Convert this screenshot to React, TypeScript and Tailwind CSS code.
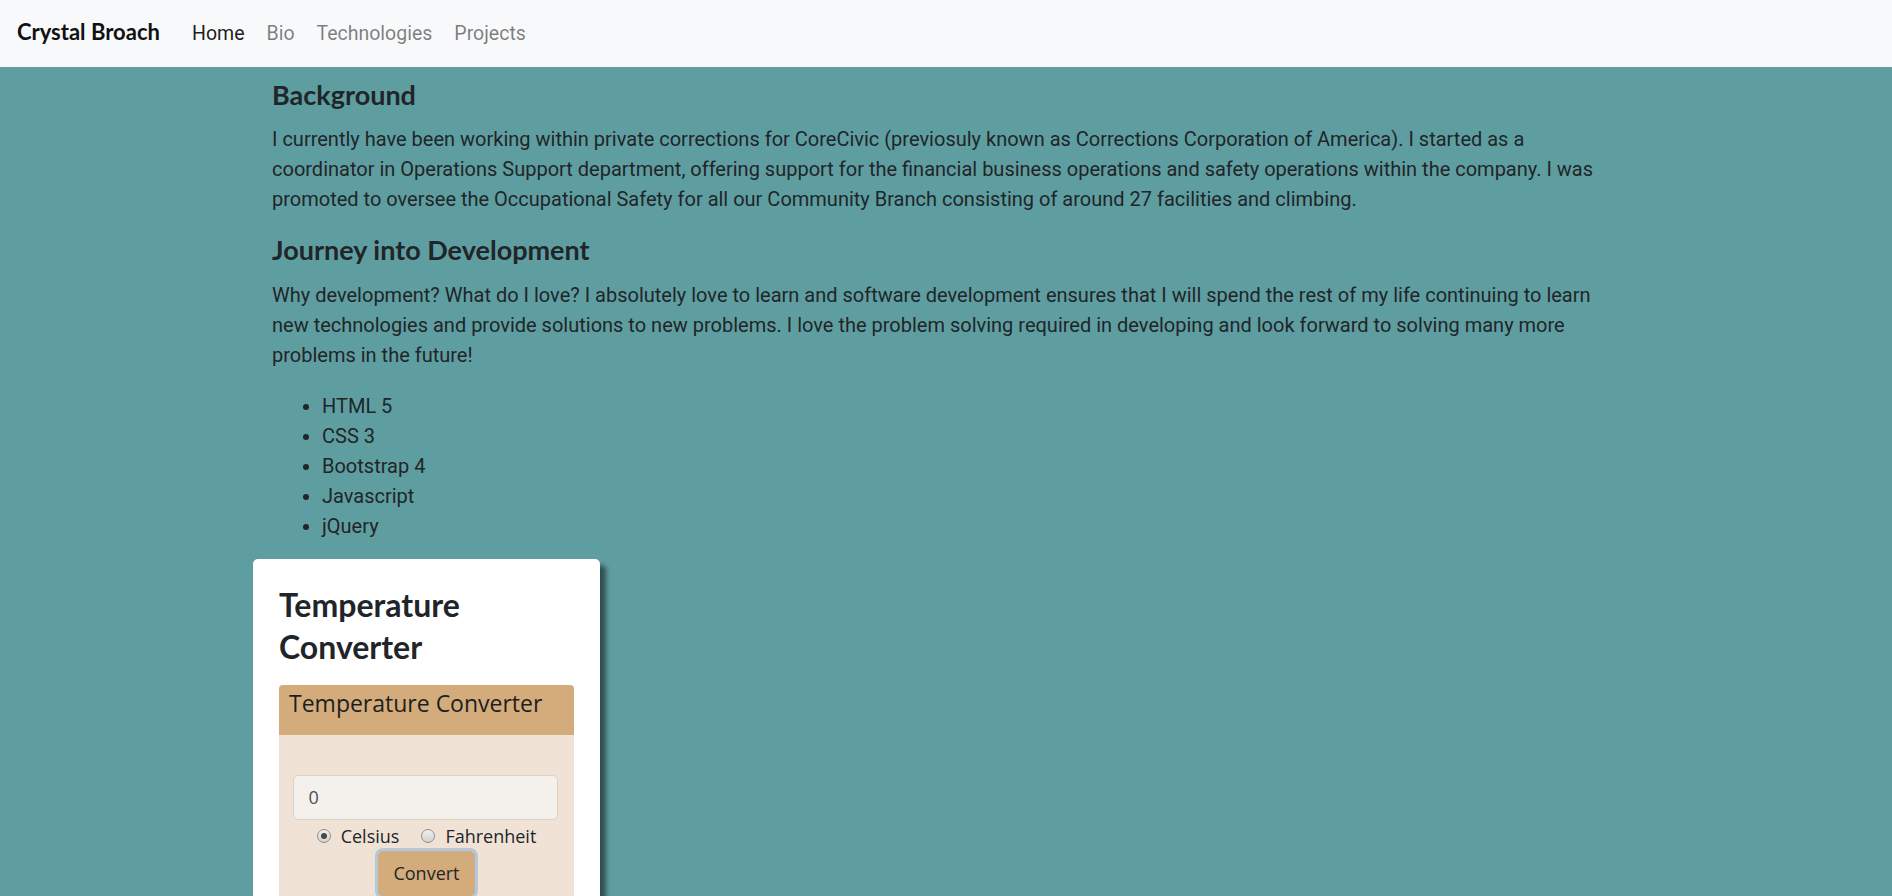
import React from "react";

function Radio({ checked }: { checked?: boolean }) {
  return (
    <span className="relative inline-flex h-[14px] w-[14px] shrink-0 items-center justify-center rounded-full border border-[#8e8e8e] bg-gradient-to-b from-[#f0f0f0] to-[#d2d2d2]">
      {checked && <span className="h-[6px] w-[6px] rounded-full bg-[#474747]" />}
    </span>
  );
}

export default function App() {
  return (
    <div className="min-h-screen bg-[#5f9ea0] text-[#212529]">
      <nav className="flex h-[67px] items-baseline bg-[#f8f9fa] pl-[17px] pt-[19px]">
        <span className="w-[164px] shrink-0 font-['Lato',sans-serif] text-[22px] font-bold leading-[26px] text-[#111]">
          Crystal Broach
        </span>
        <div className="flex items-baseline font-['Roboto',sans-serif] text-[19.5px] leading-[29px]">
          <span className="px-[11px] text-black/90">Home</span>
          <span className="px-[11px] text-black/50">Bio</span>
          <span className="px-[11px] text-black/50">Technologies</span>
          <span className="px-[11px] text-black/50">Projects</span>
        </div>
      </nav>

      <main className="box-content w-[1348px] pl-[272px] pt-[12px]">
        <h3 className="mb-[13px] font-['Lato',sans-serif] text-[27px] font-bold leading-[1.2] text-[#212529]">
          Background
        </h3>
        <p className="mb-[20px] font-['Roboto',sans-serif] text-[20px] leading-[30px]">
          I currently have been working within private corrections for CoreCivic (previosuly known as Corrections
          Corporation of America). I started as a coordinator in Operations Support department, offering support for
          the financial business operations and safety operations within the company. I was promoted to oversee the
          Occupational Safety for all our Community Branch consisting of around 27 facilities and climbing.
        </p>
        <h3 className="mb-[13px] font-['Lato',sans-serif] text-[27px] font-bold leading-[1.2] text-[#212529]">
          Journey into Development
        </h3>
        <p className="mb-[21px] font-['Roboto',sans-serif] text-[20px] leading-[30px]">
          Why development? What do I love? I absolutely love to learn and software development ensures that I will
          spend the rest of my life continuing to learn new technologies and provide solutions to new problems. I love
          the problem solving required in developing and look forward to solving many more problems in the future!
        </p>
        <ul className="mb-[18px] list-disc pl-[50px] font-['Roboto',sans-serif] text-[20px] leading-[30px]">
          <li>HTML 5</li>
          <li>CSS 3</li>
          <li>Bootstrap 4</li>
          <li>Javascript</li>
          <li>jQuery</li>
        </ul>
      </main>

      <div className="ml-[253px] w-[347px] rounded-[5px] bg-white px-[26px] pb-[40px] pt-[25px] shadow-[6px_6px_5px_#2f4f4f]">
        <h2 className="font-['Lato',sans-serif] text-[32px] font-bold leading-[42px] text-[#212529]">
          Temperature Converter
        </h2>
        <div className="mt-[17px] overflow-hidden rounded-t-[4px] font-['Open_Sans',sans-serif]">
          <div className="h-[50px] bg-[#d4ab7a] pl-[10px] pt-[5px] text-[23px] leading-[1.2] text-[#1c1f22]">
            Temperature Converter
          </div>
          <div className="flex flex-col items-center bg-[#f0e3d6] pb-[40px] pt-[40px]">
            <div className="ml-[-3px] flex h-[45px] w-[265px] items-center rounded-[5px] border border-[#d9d2cb] bg-[#f4f0ec] pl-[15px] text-[18px] text-[#495057]">
              0
            </div>
            <div className="mt-[4px] flex items-center text-[18px] leading-[24px] text-[#212529]">
              <Radio checked />
              <span className="ml-[10px]">Celsius</span>
              <span className="ml-[22px]">
                <Radio />
              </span>
              <span className="ml-[10px]">Fahrenheit</span>
            </div>
            <button className="mt-[3px] rounded-[5px] border border-[#d4ab7a] bg-[#d4ab7a] px-[14px] py-[8px] text-[18px] leading-[27px] text-[#212529] shadow-[0_0_0_3px_#b3c8dd]">
              Convert
            </button>
          </div>
        </div>
      </div>
    </div>
  );
}
